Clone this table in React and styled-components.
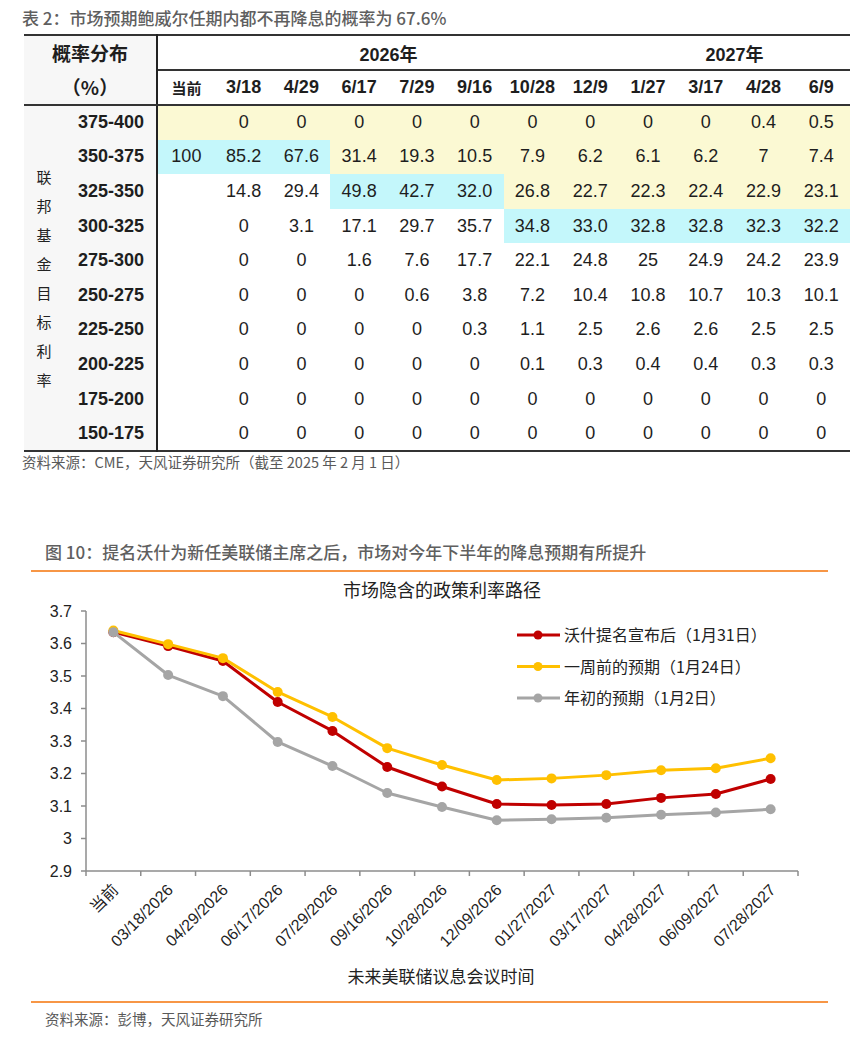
import React from "react"
import styled, { createGlobalStyle } from "styled-components"

const GlobalStyle = createGlobalStyle`
  html, body {
    margin: 0;
    padding: 0;
    background: #ffffff;
  }
  body {
    font-family: "Liberation Sans", Arial, "Noto Sans CJK SC", sans-serif;
  }
`

const CJK = `"Noto Sans CJK SC", "Liberation Sans", sans-serif`
const NUM = `"Liberation Sans", Arial, "Noto Sans CJK SC", sans-serif`

const dates = ["3/18", "4/29", "6/17", "7/29", "9/16", "10/28", "12/9", "1/27", "3/17", "4/28", "6/9"]

// y = 黄色, c = 蓝色
const rows = [
  { range: "375-400", values: ["", 0, 0, 0, 0, 0, 0, 0, 0, 0, 0.4, 0.5], tones: "yyyyyyyyyyyy" },
  { range: "350-375", values: [100, 85.2, 67.6, 31.4, 19.3, 10.5, 7.9, 6.2, 6.1, 6.2, 7, 7.4], tones: "cccyyyyyyyyy" },
  { range: "325-350", values: ["", 14.8, 29.4, 49.8, 42.7, "32.0", 26.8, 22.7, 22.3, 22.4, 22.9, 23.1], tones: "---cccyyyyyy" },
  { range: "300-325", values: ["", 0, 3.1, 17.1, 29.7, 35.7, 34.8, "33.0", 32.8, 32.8, 32.3, 32.2], tones: "------cccccc" },
  { range: "275-300", values: ["", 0, 0, 1.6, 7.6, 17.7, 22.1, 24.8, 25, 24.9, 24.2, 23.9] },
  { range: "250-275", values: ["", 0, 0, 0, 0.6, 3.8, 7.2, 10.4, 10.8, 10.7, 10.3, 10.1] },
  { range: "225-250", values: ["", 0, 0, 0, 0, 0.3, 1.1, 2.5, 2.6, 2.6, 2.5, 2.5] },
  { range: "200-225", values: ["", 0, 0, 0, 0, 0, 0.1, 0.3, 0.4, 0.4, 0.3, 0.3] },
  { range: "175-200", values: ["", 0, 0, 0, 0, 0, 0, 0, 0, 0, 0, 0] },
  { range: "150-175", values: ["", 0, 0, 0, 0, 0, 0, 0, 0, 0, 0, 0] },
]

const xLabels = [
  "当前", "03/18/2026", "04/29/2026", "06/17/2026", "07/29/2026", "09/16/2026", "10/28/2026",
  "12/09/2026", "01/27/2027", "03/17/2027", "04/28/2027", "06/09/2027", "07/28/2027",
]

const series = [
  { name: "沃什提名宣布后（1月31日）", color: "#c00000", values: [3.635, 3.592, 3.546, 3.42, 3.331, 3.22, 3.16, 3.106, 3.103, 3.106, 3.125, 3.137, 3.183] },
  { name: "一周前的预期（1月24日）", color: "#ffc000", values: [3.64, 3.598, 3.555, 3.451, 3.374, 3.278, 3.226, 3.18, 3.185, 3.195, 3.21, 3.216, 3.247] },
  { name: "年初的预期（1月2日）", color: "#a5a5a5", values: [3.635, 3.503, 3.438, 3.297, 3.223, 3.14, 3.097, 3.056, 3.059, 3.064, 3.073, 3.08, 3.09] },
]

const Page = styled.div`
  width: 865px;
  padding-top: 6px;
`

const TableSection = styled.section`
  padding-left: 22px;
`

const Caption = styled.div`
  font-family: ${CJK};
  font-size: 17px;
  font-weight: 500;
  line-height: 24px;
  color: #5f5f5f;
  white-space: nowrap;
`

const Source = styled.div`
  font-family: ${CJK};
  font-size: 14.5px;
  line-height: 20px;
  color: #595959;
  white-space: nowrap;
`

const Table = styled.table`
  border-collapse: collapse;
  table-layout: fixed;
  width: 826px;
  margin: 4px 0 0 2px;
  font-family: ${NUM};
  color: #1e1e1e;
  border-top: 2px solid #333;
  border-bottom: 2px solid #333;
`

const Corner = styled.th`
  background: #f7f7f7;
  border-right: 2px solid #222;
  border-bottom: 2px solid #333;
  font-family: ${CJK};
  font-size: 19px;
  font-weight: 700;
  line-height: 34px;
  padding: 0;
`

const YearCell = styled.th`
  height: 33px;
  padding: 0;
  border-bottom: 2px solid #333;
  font-family: ${NUM};
  font-size: 18px;
  font-weight: 700;
  text-align: center;
`

const DateCell = styled.th`
  height: 33px;
  padding: 0;
  border-bottom: 2px solid #333;
  font-family: ${(p) => (p.$cjk ? CJK : NUM)};
  font-size: ${(p) => (p.$cjk ? "15px" : "18px")};
  font-weight: 700;
  text-align: center;
  white-space: nowrap;
`

const BodyRow = styled.tr`
  height: 34.6px;
`

const SideLabel = styled.th`
  background: #f7f7f7;
  padding: 0;
  vertical-align: middle;
  text-align: center;
`

const SideText = styled.div`
  width: 16px;
  margin: 0 auto;
  font-family: ${CJK};
  font-size: 15px;
  font-weight: 400;
  line-height: 29px;
  color: #222;
`

const RangeCell = styled.th`
  background: #f7f7f7;
  border-right: 2px solid #222;
  padding: 0 12px 0 0;
  text-align: right;
  font-size: 18px;
  font-weight: 700;
  white-space: nowrap;
`

const toneColor = { y: "#fbf9d3", c: "#c4f7fb" }

const ValueCell = styled.td`
  padding: 0;
  text-align: center;
  font-size: 18px;
  background: ${(p) => toneColor[p.$tone] || "#ffffff"};
  white-space: nowrap;
`

const FigureSection = styled.section`
  margin: 68px 37px 0 31px;
`

const FigureCaption = styled(Caption)`
  padding: 0 0 6px 14px;
  border-bottom: 2px solid #f79646;
`

const ChartSvg = styled.svg`
  display: block;
  border-bottom: 2px solid #f79646;
`

const FigureSource = styled(Source)`
  margin-top: 6px;
  padding-left: 14px;
`

const RateTable = () => (
  <Table>
    <colgroup>
      <col style={{ width: 40 }} />
      <col style={{ width: 93 }} />
      {Array.from({ length: 12 }).map((_, i) => (
        <col key={i} style={{ width: 57.75 }} />
      ))}
    </colgroup>
    <thead>
      <tr>
        <Corner rowSpan={2} colSpan={2}>
          概率分布
          <br />（%）
        </Corner>
        <YearCell colSpan={8}>2026年</YearCell>
        <YearCell colSpan={4}>2027年</YearCell>
      </tr>
      <tr>
        <DateCell $cjk>当前</DateCell>
        {dates.map((d) => (
          <DateCell key={d}>{d}</DateCell>
        ))}
      </tr>
    </thead>
    <tbody>
      {rows.map((row, r) => (
        <BodyRow key={row.range}>
          {r === 0 && (
            <SideLabel rowSpan={10}>
              <SideText>联邦基金目标利率</SideText>
            </SideLabel>
          )}
          <RangeCell>{row.range}</RangeCell>
          {row.values.map((v, i) => (
            <ValueCell key={i} $tone={row.tones ? row.tones[i] : "-"}>
              {v}
            </ValueCell>
          ))}
        </BodyRow>
      ))}
    </tbody>
  </Table>
)

// chart geometry (svg coords)
const W = 797
const H = 429
const AX = 55
const AXEND = 767
const BASE = 299
const STEP = (AXEND - AX) / 13
const yOf = (v) => BASE - (v - 2.9) * 325
const xOf = (i) => AX + STEP * (i + 0.5)

const RateChart = () => (
  <ChartSvg width={W} height={H} viewBox={`0 0 ${W} ${H}`}>
    <text x={411} y={25} textAnchor="middle" fontFamily={CJK} fontSize="18" fill="#222">
      市场隐含的政策利率路径
    </text>

    {/* y axis */}
    <line x1={AX} y1={yOf(3.7)} x2={AX} y2={BASE} stroke="#8c8c8c" strokeWidth="1.5" />
    {[2.9, 3, 3.1, 3.2, 3.3, 3.4, 3.5, 3.6, 3.7].map((v) => (
      <g key={v}>
        <line x1={AX - 5} y1={yOf(v)} x2={AX} y2={yOf(v)} stroke="#8c8c8c" strokeWidth="1.5" />
        <text x={41} y={yOf(v) + 5.5} textAnchor="end" fontFamily={NUM} fontSize="16" fill="#222">
          {v === 3 ? "3" : v.toFixed(1)}
        </text>
      </g>
    ))}

    {/* x axis */}
    <line x1={AX} y1={BASE} x2={AXEND} y2={BASE} stroke="#8c8c8c" strokeWidth="1.5" />
    {Array.from({ length: 14 }).map((_, i) => (
      <line key={i} x1={AX + STEP * i} y1={BASE} x2={AX + STEP * i} y2={BASE + 5} stroke="#8c8c8c" strokeWidth="1.5" />
    ))}
    {xLabels.map((l, i) => (
      <text
        key={l}
        x={xOf(i) + 6}
        y={BASE + 20}
        textAnchor="end"
        transform={`rotate(-45 ${xOf(i) + 6} ${BASE + 20})`}
        fontFamily={i === 0 ? CJK : NUM}
        fontSize="16"
        fill="#222"
      >
        {l}
      </text>
    ))}
    <text x={410} y={411} textAnchor="middle" fontFamily={CJK} fontSize="17" fill="#222">
      未来美联储议息会议时间
    </text>

    {/* series */}
    {series.map((s) => (
      <g key={s.name}>
        <polyline
          points={s.values.map((v, i) => `${xOf(i)},${yOf(v)}`).join(" ")}
          fill="none"
          stroke={s.color}
          strokeWidth="3"
          strokeLinejoin="round"
        />
        {s.values.map((v, i) => (
          <circle key={i} cx={xOf(i)} cy={yOf(v)} r="5" fill={s.color} />
        ))}
      </g>
    ))}

    {/* legend */}
    {series.map((s, i) => {
      const y = 63 + i * 31.5
      return (
        <g key={s.name}>
          <line x1={486} y1={y} x2={529} y2={y} stroke={s.color} strokeWidth="3" />
          <circle cx={507} cy={y} r="4.5" fill={s.color} />
          <text x={533} y={y + 6} fontFamily={CJK} fontSize="16" fill="#222">
            {s.name}
          </text>
        </g>
      )
    })}
  </ChartSvg>
)

export default function App() {
  return (
    <Page>
      <GlobalStyle />
      <TableSection>
        <Caption>表 2：市场预期鲍威尔任期内都不再降息的概率为 67.6%</Caption>
        <RateTable />
        <Source>资料来源：CME，天风证券研究所（截至 2025 年 2 月 1 日）</Source>
      </TableSection>
      <FigureSection>
        <FigureCaption>图 10：提名沃什为新任美联储主席之后，市场对今年下半年的降息预期有所提升</FigureCaption>
        <RateChart />
        <FigureSource>资料来源：彭博，天风证券研究所</FigureSource>
      </FigureSection>
    </Page>
  )
}
